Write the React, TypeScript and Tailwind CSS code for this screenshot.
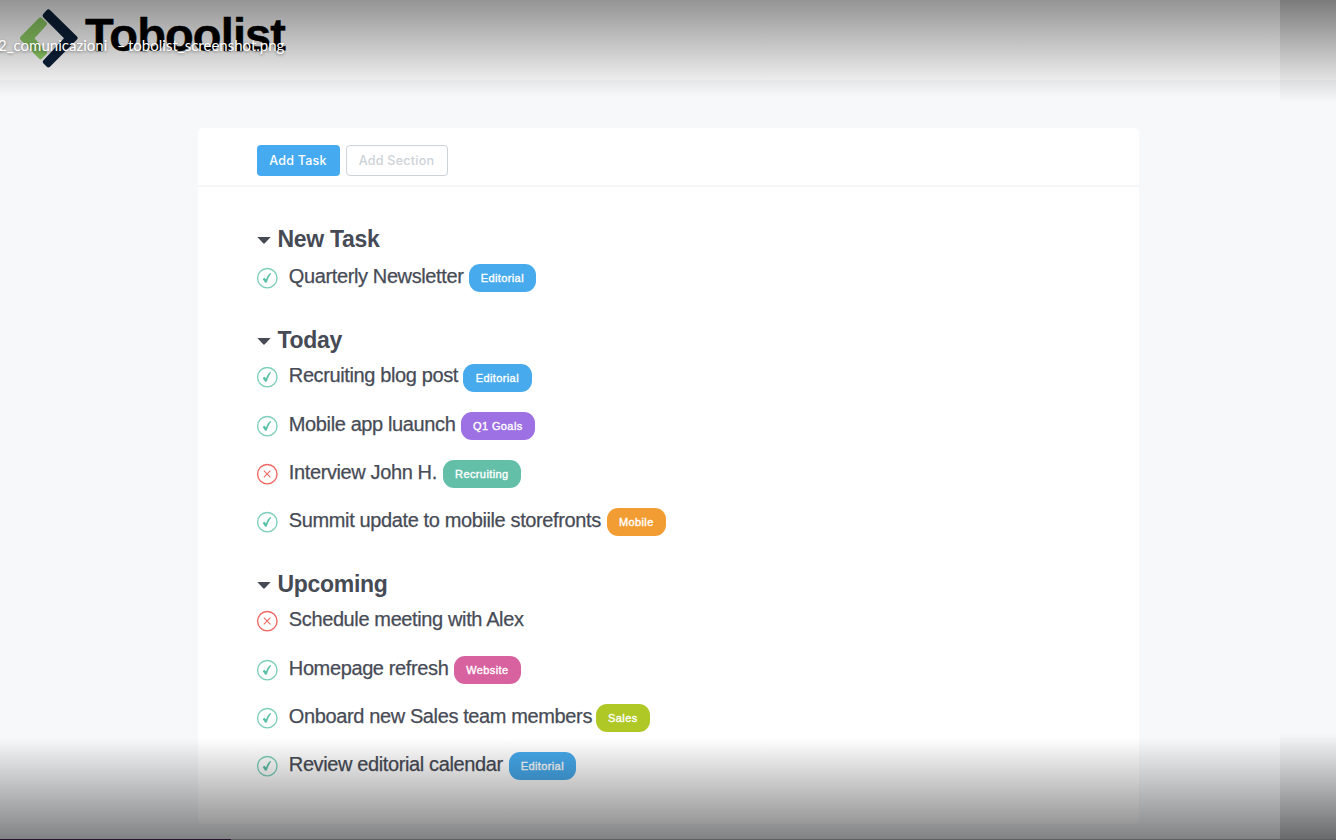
import React from "react";

type Task = { title: string; done: boolean; width: string; tag?: string; tagClass?: string };
type Section = { name: string; headingClass: string; tasks: Task[] };

const sections: Section[] = [
  {
    name: "New Task",
    headingClass: "mb-px h-[29px]",
    tasks: [{ title: "Quarterly Newsletter", done: true, width: "w-[180px]", tag: "Editorial", tagClass: "w-[67px] bg-[#46aaec]" }],
  },
  {
    name: "Today",
    headingClass: "h-[27.5px]",
    tasks: [
      { title: "Recruiting blog post", done: true, width: "w-[174px]", tag: "Editorial", tagClass: "w-[69px] bg-[#46aaec]" },
      { title: "Mobile app luaunch", done: true, width: "w-[172px]", tag: "Q1 Goals", tagClass: "w-[74px] bg-[#9d70e3]" },
      { title: "Interview John H.", done: false, width: "w-[154px]", tag: "Recruiting", tagClass: "w-[78px] bg-[#64bfa9]" },
      { title: "Summit update to mobiile storefronts", done: true, width: "w-[318px]", tag: "Mobile", tagClass: "w-[59px] bg-[#f29d33]" },
    ],
  },
  {
    name: "Upcoming",
    headingClass: "h-[27.5px]",
    tasks: [
      { title: "Schedule meeting with Alex", done: false, width: "w-[240px]" },
      { title: "Homepage refresh", done: true, width: "w-[165px]", tag: "Website", tagClass: "w-[67px] bg-[#d8629f]" },
      { title: "Onboard new Sales team members", done: true, width: "w-[307px]", tag: "Sales", tagClass: "w-[54px] bg-[#afc826]" },
      { title: "Review editorial calendar", done: true, width: "w-[220px]", tag: "Editorial", tagClass: "w-[67px] bg-[#46aaec]" },
    ],
  },
];

function StatusIcon({ done }: { done: boolean }) {
  return done ? (
    <svg className="h-[22px] w-[22px] shrink-0" viewBox="0 0 22 22" fill="none">
      <circle cx="11.3" cy="11.2" r="9.7" stroke="#7dcfba" strokeWidth="1.4" />
      <path d="M6.6 11.9 8.6 10.8 10 12.6C11 9.7 12.2 7.5 14.2 6L15.2 6.6C13.1 9.2 11.9 12 10.8 15.6L9.2 15.8Z" fill="#59bfa5" />
    </svg>
  ) : (
    <svg className="h-[22px] w-[22px] shrink-0" viewBox="0 0 22 22" fill="none">
      <circle cx="11.3" cy="11.2" r="9.7" stroke="#ee6864" strokeWidth="1.4" />
      <path d="m7.8 7.7 6.6 6.6m0-6.6-6.6 6.6" stroke="#ee6864" strokeWidth="1.1" />
    </svg>
  );
}

function TaskRow({ task }: { task: Task }) {
  return (
    <li className="flex h-[48.2px] items-center">
      <StatusIcon done={task.done} />
      <span className={`ml-[11px] shrink-0 pb-[4px] text-[20px] leading-6 tracking-[-0.38px] whitespace-nowrap text-[#474b56] [-webkit-text-stroke:0.25px_#474b56] ${task.width}`}>
        {task.title}
      </span>
      {task.tag && (
        <span className={`mt-[0.6px] flex h-[28px] items-center justify-center rounded-[11px] text-[11px] font-medium tracking-[0.4px] text-white [-webkit-text-stroke:0.35px_white] ${task.tagClass}`}>
          {task.tag}
        </span>
      )}
    </li>
  );
}

export default function App() {
  return (
    <div className="relative flex h-[840px] w-[1336px] flex-col overflow-hidden bg-[#f6f8fa] font-['Liberation_Sans',Arial,sans-serif]">
      <header className="flex h-[80px] shrink-0 items-start bg-white pt-[9px] pl-[19px]">
        <svg className="h-[60px] w-[60px] shrink-0" viewBox="0 0 60 60">
          <path d="M20.2 8.8Q21.5 7.8 22.8 9L27.6 13.6Q28.6 14.8 27.6 16L15.5 29.3 27.6 42.6Q28.6 43.8 27.6 45L22.8 49.8Q21.5 51 20.2 49.8L1.5 30.8Q.3 29.2 1.5 27.8Z" fill="#8fce66" />
          <path d="M27.8 1Q29.4-.5 31 1L58 27.6Q59.4 29 58 30.6L31 57.7Q29.4 59.2 27.8 57.7L24.5 54.5Q23 52.8 24.5 51.3L45 29.2 24.2 8.2Q23 6.4 24.4 4.8Z" fill="#0c2038" />
        </svg>
        <h1 className="ml-[6px] text-[47px] leading-[52px] font-bold tracking-[-0.87px] text-black [-webkit-text-stroke:0.5px_black]">Toboolist</h1>
      </header>

      <main className="mx-auto mt-[48px] h-[696px] w-[941px] shrink-0 rounded-[5px] bg-white">
        <div className="flex h-[59px] items-start gap-[6px] border-b-2 border-[#f5f6f8] pt-[17px] pl-[59px] font-[Inter,sans-serif] text-[12.5px] font-medium">
          <button className="h-[31px] w-[83px] rounded-[4px] bg-[#46aaf0] pt-[2px] tracking-[0.25px] text-white">Add Task</button>
          <button className="h-[31px] w-[102px] rounded-[4px] border border-[#cdd2d7] pt-[2px] tracking-[0.25px] text-[#cdd2d7]">Add Section</button>
        </div>
        <div className="flex flex-col gap-[23.7px] pt-[37px] pl-[59px]">
          {sections.map((section) => (
            <section key={section.name}>
              <h2 className={`flex items-center text-[23px] leading-7 font-bold tracking-[-0.3px] text-[#464a55] ${section.headingClass}`}>
                <svg className="mt-[4px] mr-[7px] h-[7px] w-[14px]" viewBox="0 0 14 7">
                  <path d="M.3 0h13.4L7.8 6.3q-.8.7-1.6 0Z" fill="#464a55" />
                </svg>
                {section.name}
              </h2>
              <ul className="-ml-[0.7px]">
                {section.tasks.map((task) => (
                  <TaskRow key={task.title} task={task} />
                ))}
              </ul>
            </section>
          ))}
        </div>
      </main>

      <div className="absolute top-0 left-0 h-[97px] w-[1280px] bg-linear-to-b from-black/42 to-black/0" />
      <div className="absolute top-0 right-0 h-[102px] w-[56px] bg-linear-to-b from-black/52 to-black/0" />
      <div className="absolute bottom-0 left-0 h-[102px] w-[1280px] bg-linear-to-t from-black/48 to-black/0" />
      <div className="absolute right-0 bottom-0 h-[107px] w-[56px] bg-linear-to-t from-black/58 to-black/0" />
      <div className="absolute bottom-0 left-0 flex h-px w-full bg-[#606060]">
        <div className="w-[231px] bg-[#25142b]" />
      </div>
      <p className="absolute top-[35px] left-[-2px] flex font-[Lato,sans-serif] text-[15px] leading-5 whitespace-pre text-white [text-shadow:0_1px_3px_rgba(0,0,0,0.45)]">
        <span className="w-[119px]">2_comunicazioni</span>
        <span className="w-[11px]">–</span>
        <span>tobolist_screenshot.png</span>
      </p>
    </div>
  );
}
